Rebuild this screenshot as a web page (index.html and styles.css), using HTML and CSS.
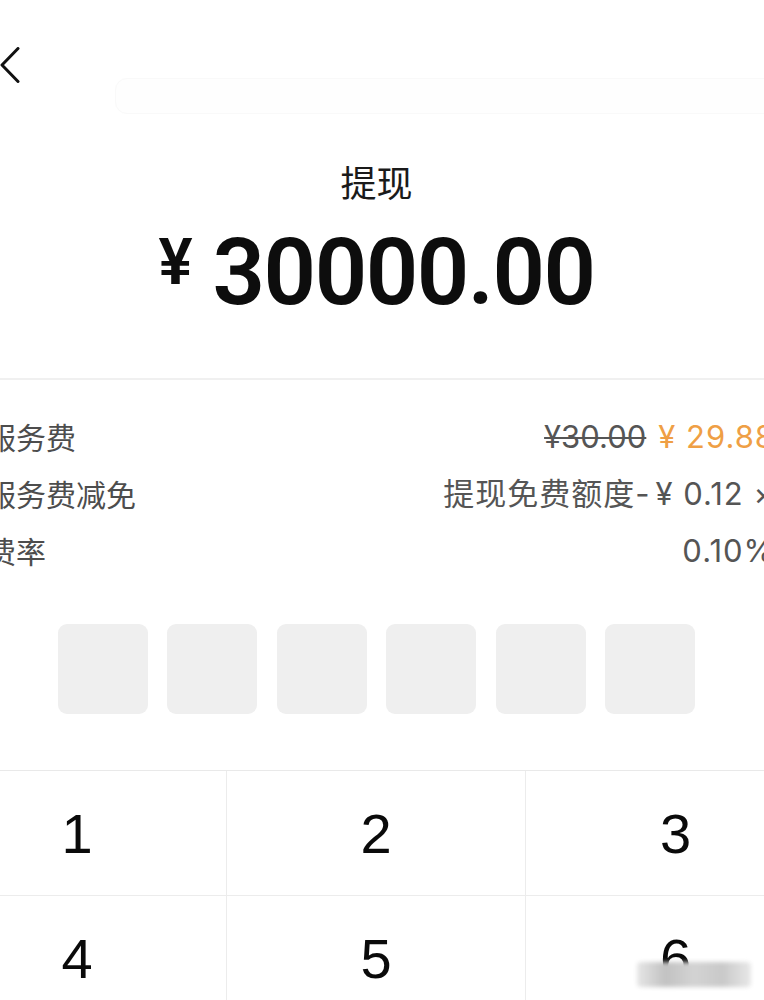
FILE: index.html
```html
<!DOCTYPE html>
<html lang="zh-CN">
<head>
  <meta charset="UTF-8">
  <title>提现</title>
  <link rel="stylesheet" href="styles.css">
</head>
<body>
<div class="screen">
  <div class="topbar">
    <svg class="back" width="20" height="36" viewBox="0 0 20 36">
      <polyline points="18,1.5 2,18 18,34.5" />
    </svg>
    <div class="ghost-box"></div>
  </div>

  <div class="title">提现</div>
  <div class="amount">
    <span class="amount-sign">¥</span>
    <span class="amount-num">30000.00</span>
  </div>

  <div class="fees">
    <div class="fee-row">
      <span class="fee-label">服务费</span>
      <span class="fee-value"><s class="old-price">¥30.00</s><span class="new-price">¥ 29.88</span></span>
    </div>
    <div class="fee-row">
      <span class="fee-label">服务费减免</span>
      <span class="fee-value">提现免费额度-<span class="dash-gap">¥</span> 0.12 ×</span>
    </div>
    <div class="fee-row">
      <span class="fee-label">费率</span>
      <span class="fee-value">0.10%</span>
    </div>
  </div>

  <div class="pin">
    <div class="pin-box"></div>
    <div class="pin-box"></div>
    <div class="pin-box"></div>
    <div class="pin-box"></div>
    <div class="pin-box"></div>
    <div class="pin-box"></div>
  </div>

  <div class="keypad">
    <div class="key">1</div>
    <div class="key">2</div>
    <div class="key">3</div>
    <div class="key">4</div>
    <div class="key">5</div>
    <div class="key">6</div>
  </div>
</div>
<!-- blurred watermark patch -->
<div class="smudge"></div>
</body>
</html>
```

FILE: styles.css
```css
html, body {
  margin: 0;
  background: #ffffff;
  overflow: hidden;
}
body {
  position: relative;
  height: 1000px;
  font-family: "Noto Sans CJK SC", sans-serif;
}
/* the phone screen is wider than the crop: it runs from -72px to 825px */
.screen {
  width: 897px;
  margin-left: -72px;
}

.topbar {
  display: flex;
  align-items: flex-start;
  height: 161px;
}
.back {
  display: block;
  margin: 47px 0 0 72px;
}
.back polyline {
  fill: none;
  stroke: #111111;
  stroke-width: 3;
  stroke-linecap: round;
  stroke-linejoin: round;
}
.ghost-box {
  margin: 78px 0 0 95px;
  width: 700px;
  height: 34px;
  border: 1px solid #f9f9f9;
  border-radius: 12px;
  background: #fefefe;
}

.title {
  text-align: center;
  font-size: 36px;
  line-height: 40px;
  color: #1a1a1a;
}
.amount {
  display: flex;
  justify-content: center;
  align-items: flex-start;
  gap: 20px;
  margin-top: 26px;
  font-family: Roboto, sans-serif;
  font-weight: 600;
  color: #0d0d0d;
}
.amount-sign {
  font-size: 64px;
  line-height: 1;
  margin-top: 4px;
}
.amount-num {
  font-size: 92px;
  line-height: 1;
  letter-spacing: -1.5px;
}

.fees {
  margin-top: 59px;
  border-top: 2px solid #f0f0f0;
  padding: 28px 50px 0 58px;
}
.fee-row {
  display: flex;
  justify-content: space-between;
  height: 57px;
  line-height: 57px;
  font-size: 30px;
  color: #4d4d4d;
}
.fee-value {
  font-family: Inter, "Noto Sans CJK SC", sans-serif;
  font-size: 31px;
  letter-spacing: 1px;
  color: #555555;
}
.old-price {
  letter-spacing: 0;
  text-decoration-thickness: 2px;
  color: #555555;
}
.new-price {
  margin-left: 12px;
  color: #ef9f45;
}
.dash-gap {
  margin-left: 5px;
}

.pin {
  display: flex;
  justify-content: center;
  gap: 19.5px;
  margin-top: 45px;
}
.pin-box {
  width: 90px;
  height: 90px;
  border-radius: 9px;
  background: #efefef;
}

.keypad {
  display: grid;
  grid-template-columns: repeat(3, 1fr);
  margin-top: 56px;
  border-top: 1px solid #e9e9e9;
}
.key {
  height: 124px;
  border-right: 1px solid #ececec;
  border-bottom: 1px solid #ececec;
  display: flex;
  align-items: center;
  justify-content: center;
  font-family: "Liberation Sans", Arial, sans-serif;
  font-size: 56px;
  color: #0a0a0a;
}
.key:nth-child(3n) {
  border-right: none;
}

.smudge {
  position: absolute;
  left: 637px;
  top: 962px;
  width: 114px;
  height: 25px;
  border-radius: 4px;
  background: linear-gradient(90deg, #e6e6e6, #c2c2c2 25%, #d3d3d3 50%, #c9c9c9 75%, #e8e8e8);
  filter: blur(2px);
}
```
